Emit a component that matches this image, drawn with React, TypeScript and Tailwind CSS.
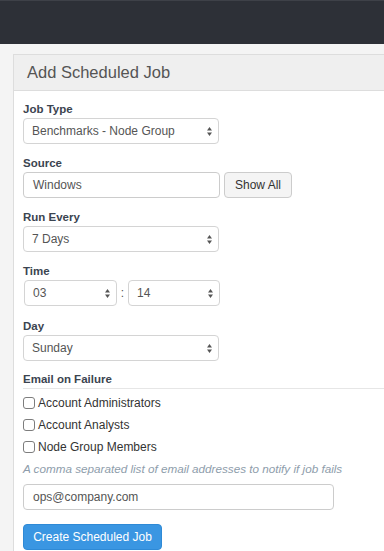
import React from "react";

const Arrows = () => (
  <svg width="5" height="9" viewBox="0 0 5 9" className="shrink-0">
    <polygon points="0,3.6 2.5,0 5,3.6" fill="#555" />
    <polygon points="0,5.4 2.5,9 5,5.4" fill="#555" />
  </svg>
);

const Select = ({ value, w }: { value: string; w: string }) => (
  <div
    className={`${w} h-[26px] bg-white border border-[#d4d4d4] rounded-[4px] flex items-center justify-between pl-[8px] pr-[6px] text-[12px] text-[#555]`}
  >
    <span>{value}</span>
    <Arrows />
  </div>
);

const Label = ({ children, first }: { children: React.ReactNode; first?: boolean }) => (
  <div
    className={`${first ? "" : "mt-[10px]"} h-[18px] leading-[18px] text-[11.5px] font-bold text-[#3b4450]`}
  >
    {children}
  </div>
);

const Check = ({ label }: { label: string }) => (
  <div className="h-[22px] flex items-center text-[12px] text-[#333]">
    <span className="w-[12px] h-[12px] border border-[#7d7d7d] rounded-[3px] bg-white mr-[3px]" />
    <span>{label}</span>
  </div>
);

export default function App() {
  return (
    <div className="w-[384px] h-[551px] overflow-hidden bg-[#f4f4f4] font-['Liberation_Sans',Arial,sans-serif]">
      <div className="h-[44px] bg-[#2d3037] border-t border-[#3e4148]" />
      <div className="pt-[10px] pl-[13px]">
        <div className="bg-white border-l border-t border-[#dddddd] h-[600px]">
          <div className="h-[36px] bg-[#efefef] border-b border-[#dddddd] pl-[13px] flex items-center text-[16.5px] text-[#555]">
            Add Scheduled Job
          </div>
          <div className="pl-[9px] pt-[9px]">
            <Label first>Job Type</Label>
            <Select value="Benchmarks - Node Group" w="w-[196px]" />

            <Label>Source</Label>
            <div className="flex items-center">
              <div className="w-[197px] h-[26px] border border-[#cccccc] rounded-[4px] flex items-center pl-[9px] text-[12px] text-[#555]">
                Windows
              </div>
              <div className="ml-[4px] w-[68px] h-[26px] bg-[#f4f4f4] border border-[#cccccc] rounded-[4px] flex items-center justify-center text-[12px] text-[#333]">
                Show All
              </div>
            </div>

            <Label>Run Every</Label>
            <Select value="7 Days" w="w-[196px]" />

            <Label>Time</Label>
            <div className="flex items-center">
              <div className="ml-[1px]">
                <Select value="03" w="w-[93px]" />
              </div>
              <div className="w-[11px] text-center text-[12px] text-[#555]">:</div>
              <Select value="14" w="w-[92px]" />
            </div>

            <div className="mt-[11px] h-[18px] leading-[18px] text-[11.5px] font-bold text-[#3b4450]">Day</div>
            <Select value="Sunday" w="w-[196px]" />

            <div className="mt-[10px] h-[18px] leading-[17px] border-b border-[#e6e6e6] text-[11.5px] font-bold text-[#3b4450]">
              Email on Failure
            </div>
            <div className="pt-[3px]">
              <Check label="Account Administrators" />
              <Check label="Account Analysts" />
              <Check label="Node Group Members" />
            </div>
            <div className="h-[22px] leading-[22px] text-[11.7px] italic text-[#8e9dab]">
              A comma separated list of email addresses to notify if job fails
            </div>
            <div className="mt-[4px] w-[311px] h-[26px] border border-[#cccccc] rounded-[4px] flex items-center pl-[9px] text-[12px] text-[#555]">
              ops@company.com
            </div>
            <div className="mt-[14px] w-[139px] h-[26px] bg-[#3a96e2] border border-[#2f8ad6] rounded-[4px] flex items-center justify-center text-[12px] text-white">
              Create Scheduled Job
            </div>
          </div>
        </div>
      </div>
    </div>
  );
}
